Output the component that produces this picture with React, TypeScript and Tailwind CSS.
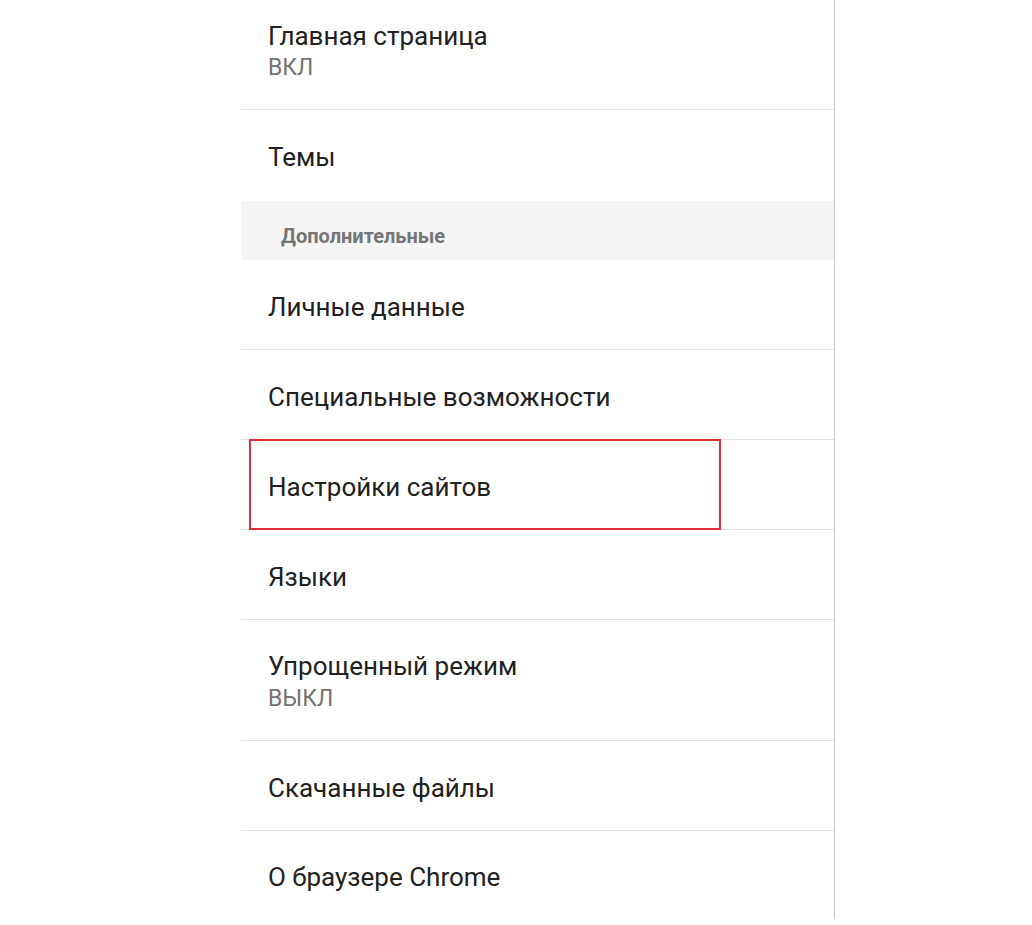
const font = { fontFamily: 'Roboto, "Noto Sans", sans-serif' }

type Row = { title: string; sub?: string; highlight?: boolean }

function SettingRow({ title, highlight, last }: Row & { last?: boolean }) {
  return (
    <div
      className={`relative flex items-center pl-[27px] pt-[4px] ${
        last ? 'h-[88px]' : 'h-[90px] border-b border-[#e2e2e2]'
      }`}
    >
      <div className="text-[26px] leading-[32px] text-[#212121]">{title}</div>
      {highlight && (
        <div className="pointer-events-none absolute -top-px bottom-[-1px] left-[8px] w-[472px] border-2 border-[#dc2f3b]" />
      )}
    </div>
  )
}

export default function App() {
  return (
    <div className="min-h-[925px] w-full bg-white" style={font}>
      <div className="ml-[241px] w-[594px] border-r border-[#c9c9c9]">
        <div className="h-[110px] border-b border-[#e2e2e2] pl-[27px] pt-[20px]">
          <div className="text-[26px] leading-[32px] text-[#212121]">Главная страница</div>
          <div className="mt-[1px] text-[23px] leading-[30px] text-[#737373]">ВКЛ</div>
        </div>
        <div className="flex h-[91px] items-center pl-[27px] pt-[3px]">
          <div className="text-[26px] leading-[32px] text-[#212121]">Темы</div>
        </div>
        <div className="h-[59px] bg-[#f5f5f5] pl-[40px] pt-[23px]">
          <div className="text-[20px] font-bold leading-[24px] text-[#757575]">Дополнительные</div>
        </div>
        <SettingRow title="Личные данные" />
        <SettingRow title="Специальные возможности" />
        <SettingRow title="Настройки сайтов" highlight />
        <SettingRow title="Языки" />
        <div className="h-[121px] border-b border-[#e2e2e2] pl-[27px] pt-[30px]">
          <div className="text-[26px] leading-[32px] text-[#212121]">Упрощенный режим</div>
          <div className="mt-[2px] text-[23px] leading-[30px] text-[#737373]">ВЫКЛ</div>
        </div>
        <SettingRow title="Скачанные файлы" />
        <SettingRow title="О браузере Chrome" last />
      </div>
    </div>
  )
}
